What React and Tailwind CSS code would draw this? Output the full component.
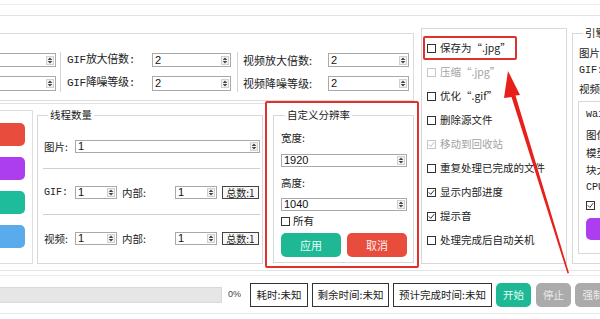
import React from 'react';

const OPTIONS = [
  { label: '保存为“.jpg”', hl: true },
  { label: '压缩“.jpg”', disabled: true },
  { label: '优化“.gif”' },
  { label: '删除源文件' },
  { label: '移动到回收站', disabled: true, checked: true },
  { label: '重复处理已完成的文件' },
  { label: '显示内部进度', checked: true },
  { label: '提示音', checked: true },
  { label: '处理完成后自动关机' },
];

const Spin = ({ value = '', className = '' }) => (
  <div className={`flex items-center shrink-0 bg-white border border-[#a9a9a9] ${className}`}>
    <span className="flex-1 pl-[2px] text-[11px] leading-none text-[#111] font-['Liberation_Sans',sans-serif] overflow-hidden whitespace-nowrap">{value}</span>
    <span className="mr-[1px] flex items-center justify-center w-[8px] h-[9px] border border-[#d0d0d0] bg-[#f3f3f3]">
      <svg width="6" height="7" viewBox="0 0 6 7"><path d="M3 0.5 L5.3 3 H0.7Z M0.7 4 H5.3 L3 6.5Z" fill="#444" /></svg>
    </span>
  </div>
);

const Box = ({ checked, disabled }) => (
  <span className={`w-[9px] h-[9px] border bg-white flex items-center justify-center shrink-0 ${disabled ? 'border-[#c6c6c6]' : 'border-[#333]'}`}>
    {checked && (
      <svg width="7" height="7" viewBox="0 0 7 7">
        <path d="M0.8 3.4 L2.8 5.4 L6.2 1.2" fill="none" stroke={disabled ? '#bdbdbd' : '#333'} strokeWidth="1" />
      </svg>
    )}
  </span>
);

const Legend = ({ children }) => (
  <legend className="ml-[4px] px-[2px] text-[10.5px] leading-[14px] text-[#222]">{children}</legend>
);

export default function App() {
  return (
    <div className="relative w-[600px] h-[319px] overflow-hidden bg-white text-[#222] font-['Noto_Sans_CJK_SC',sans-serif]">
      {/* top lines */}
      <div className="h-[5px] border-b border-[#ededed]" />
      <div className="h-[11px] border-b border-[#e2e2e2]" />

      <div className="flex h-[252px]">
        {/* left column */}
        <div className="w-[420px] shrink-0 flex flex-col">
          <div className="mt-[17px] w-[414px] h-[68px] border-t border-r border-b border-[#dcdcdc] flex items-start pt-[19px] text-[11px] leading-none font-['Liberation_Mono','Noto_Sans_CJK_SC',monospace]">
            <div className="flex flex-col gap-[9px] w-[56px] shrink-0">
              <Spin className="w-[56px] h-[14px] border-l-0" />
              <Spin className="w-[56px] h-[15px] border-l-0" />
            </div>
            <div className="ml-[4px] -mt-[1px] w-px h-[40px] bg-[#d4d4d4] shrink-0" />
            <div className="ml-[6px] flex flex-col gap-[9px] shrink-0">
              <div className="flex items-center h-[14px]"><span className="w-[85px] shrink-0 tracking-[-0.3px]">GIF放大倍数:</span><Spin value="2" className="w-[79px] h-[14px]" /></div>
              <div className="flex items-center h-[15px]"><span className="w-[85px] shrink-0 tracking-[-0.3px]">GIF降噪等级:</span><Spin value="2" className="w-[79px] h-[15px]" /></div>
            </div>
            <div className="ml-[6px] -mt-[1px] w-px h-[40px] bg-[#d4d4d4] shrink-0" />
            <div className="ml-[5px] flex flex-col gap-[9px] shrink-0 font-['Noto_Sans_CJK_SC',sans-serif]">
              <div className="flex items-center h-[14px]"><span className="w-[85px] shrink-0">视频放大倍数:</span><Spin value="2" className="w-[81px] h-[14px]" /></div>
              <div className="flex items-center h-[15px]"><span className="w-[85px] shrink-0">视频降噪等级:</span><Spin value="2" className="w-[81px] h-[15px]" /></div>
            </div>
          </div>

          <div className="flex items-start h-[167px]">
            <div className="w-[265px] shrink-0 mt-[2px] border-t border-[#e0e0e0] flex items-start">
              <div className="mt-[6px] w-[33px] shrink-0 h-[154px] border-t border-r border-b border-[#dedede] pt-[12px] flex flex-col gap-[11px] overflow-hidden">
                <div className="-ml-[6px] w-[31px] h-[23px] shrink-0 rounded-[5px] bg-[#e74c3c]" />
                <div className="-ml-[6px] w-[31px] h-[23px] shrink-0 rounded-[5px] bg-[#ad3ef0]" />
                <div className="-ml-[6px] w-[31px] h-[23px] shrink-0 rounded-[5px] bg-[#1fbc9b]" />
                <div className="-ml-[6px] w-[31px] h-[23px] shrink-0 rounded-[5px] bg-[#5aabeb]" />
              </div>
              <fieldset className="ml-[4px] mt-[4px] w-[226px] shrink-0 h-[156px] border border-[#d8d8d8] pl-[6px] pr-[2px]">
                <Legend>线程数量</Legend>
                <div className="mt-[18px] flex items-center h-[13px] text-[10.5px]">
                  <span className="w-[31px] shrink-0">图片:</span>
                  <Spin value="1" className="w-[185px] h-[13px]" />
                </div>
                <div className="mt-[15px] -ml-[1px] w-[217px] h-px bg-[#d0d0d0]" />
                {['GIF:', '视频:'].map((l, i) => (
                  <React.Fragment key={l}>
                    <div className="mt-[17px] flex items-center h-[13px] text-[10.5px]">
                      <span className={`w-[31px] shrink-0 ${i === 0 ? "font-['Liberation_Mono','Noto_Sans_CJK_SC',monospace] text-[10px]" : ''}`}>{l}</span>
                      <Spin value="1" className="w-[42px] h-[13px]" />
                      <span className="ml-[5px] w-[53px] shrink-0">内部:</span>
                      <Spin value="1" className="w-[42px] h-[13px]" />
                      <span className="ml-[5px] w-[37px] shrink-0 h-[13px] border border-[#444] bg-[#f7f7f7] leading-[11px] text-center text-[10px]">总数:1</span>
                    </div>
                    {i === 0 && <div className="mt-[15px] -ml-[1px] w-[217px] h-px bg-[#d0d0d0]" />}
                  </React.Fragment>
                ))}
              </fieldset>
            </div>

            {/* highlighted resolution panel */}
            <div className="w-[154px] shrink-0 h-[167px] border-2 border-[#e2302d] rounded-[2px]">
              <fieldset className="ml-[6px] mt-[5px] w-[141px] h-[155px] border border-[#d8d8d8] pl-[7px] text-[10.5px]">
                <Legend>自定义分辨率</Legend>
                <div className="mt-[9px] h-[14px] leading-[14px]">宽度:</div>
                <Spin value="1920" className="mt-[9px] w-[126px] h-[13px]" />
                <div className="mt-[9px] h-[14px] leading-[14px]">高度:</div>
                <Spin value="1040" className="mt-[8px] w-[126px] h-[13px]" />
                <div className="mt-[3px] h-[14px] flex items-center gap-[3px]"><Box />所有</div>
                <div className="mt-[5px] flex gap-[6px]">
                  <div className="w-[60px] h-[24px] rounded-[5px] bg-[#1fb894] text-[#e8fff8] text-[11px] flex items-center justify-center">应用</div>
                  <div className="w-[60px] h-[24px] rounded-[5px] bg-[#e84c3d] text-[#fff0ee] text-[11px] flex items-center justify-center">取消</div>
                </div>
              </fieldset>
            </div>
          </div>
        </div>

        {/* options panel */}
        <div className="ml-[1px] mt-[12px] w-[146px] shrink-0 h-[236px] border border-[#d8d8d8] pt-[7px] text-[10.5px]">
          {OPTIONS.map((o) => (
            <div
              key={o.label}
              className={`flex items-center gap-[4px] h-[24px] ${o.hl ? 'ml-[1px] w-[94px] border-2 border-[#e2302d] rounded-[2px] pl-[2px]' : 'pl-[5px]'} ${o.disabled ? 'text-[#a2a2a2]' : 'text-[#222]'}`}
            >
              <Box checked={o.checked} disabled={o.disabled} />
              <span className="whitespace-nowrap">{o.label}</span>
            </div>
          ))}
        </div>

        {/* engine panel */}
        <fieldset className="ml-[5px] mt-[10px] w-[60px] shrink-0 h-[238px] border border-[#d8d8d8] pl-[6px] text-[10.5px]">
          <Legend>引擎</Legend>
          <div className="mt-[4px] leading-[18px]">图片</div>
          <div className="leading-[18px] text-[10px] font-['Liberation_Mono',monospace]">GIF:</div>
          <div className="leading-[18px]">视频</div>
          <div className="mt-[3px] -ml-[1px] h-[153px] border border-[#d8d8d8] pl-[7px] pt-[6px] overflow-hidden whitespace-nowrap">
            <div className="leading-[14px] text-[10px] font-['Liberation_Mono',monospace]">waifu2x</div>
            <div className="mt-[4px] leading-[18px]">图像</div>
            <div className="leading-[17px]">模型</div>
            <div className="leading-[18px]">块大小</div>
            <div className="leading-[18px] text-[10px] font-['Liberation_Mono',monospace]">CPU</div>
            <div className="h-[17px] flex items-center"><Box checked /></div>
            <div className="mt-[4px] w-[40px] h-[22px] rounded-[5px] bg-[#ad3ef0]" />
          </div>
        </fieldset>
      </div>

      {/* separator lines */}
      <div className="mt-[2px] border-t border-[#e4e4e4]" />
      <div className="mt-[4px] border-t border-[#ececec]" />

      {/* status bar */}
      <div className="mt-[7px] flex items-center h-[24px] text-[10.5px]">
        <div className="w-[222px] shrink-0 h-[16px] bg-[#e6e6e6] border border-[#d9d9d9] border-l-0" />
        <span className="ml-[6px] w-[10px] shrink-0 text-[9px] text-[#444] font-['Liberation_Sans',sans-serif]">0%</span>
        <span className="ml-[12px] w-[58px] shrink-0 h-[24px] border border-[#333] flex items-center justify-center">耗时:未知</span>
        <span className="ml-[4px] w-[77px] shrink-0 h-[24px] border border-[#333] flex items-center justify-center">剩余时间:未知</span>
        <span className="ml-[4px] w-[99px] shrink-0 h-[24px] border border-[#333] flex items-center justify-center">预计完成时间:未知</span>
        <span className="ml-[4px] w-[35px] shrink-0 h-[24px] rounded-[5px] bg-[#1fb894] text-[#e6fff7] flex items-center justify-center">开始</span>
        <span className="ml-[5px] w-[35px] shrink-0 h-[24px] rounded-[5px] bg-[#ababab] text-[#ececec] flex items-center justify-center">停止</span>
        <span className="ml-[4px] w-[36px] shrink-0 h-[24px] rounded-[5px] bg-[#ababab] text-[#ececec] flex items-center justify-center">强制</span>
      </div>
      <div className="mt-[6px] border-t border-[#e8e8e8]" />

      {/* annotation arrow */}
      <svg className="absolute inset-0 pointer-events-none" width="600" height="319" viewBox="0 0 600 319">
        <polygon points="508,71 520,95 515.5,95.5 569,273 567.5,273.5 511.5,97 504,98" fill="#e8201b" />
      </svg>
    </div>
  );
}
